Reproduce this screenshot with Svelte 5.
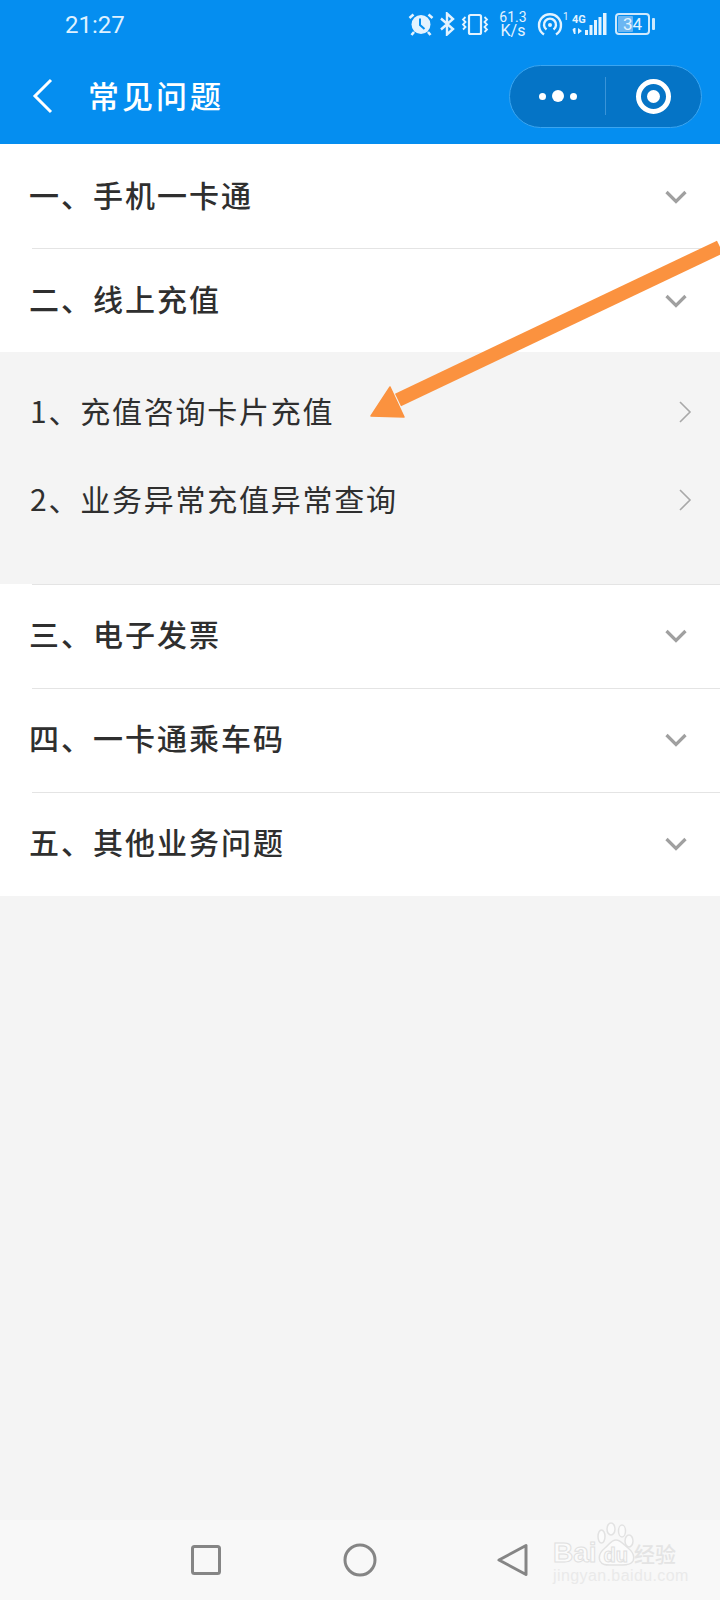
<script>
  const top = [
    { label: '一、手机一卡通', size: 'first' },
    { label: '二、线上充值', size: 'second' }
  ];
  const subs = ['1、充值咨询卡片充值', '2、业务异常充值异常查询'];
  const rest = ['三、电子发票', '四、一卡通乘车码', '五、其他业务问题'];
</script>

{#snippet chevDown()}
  <svg width="24" height="16" viewBox="0 0 24 16"><path d="M2.5 3 12 12.5 21.5 3" fill="none" stroke="#a0a0a0" stroke-width="3.200"/></svg>
{/snippet}
{#snippet chevRight()}
  <svg width="16" height="24" viewBox="0 0 16 24"><path d="M3 2 13 12 3 22" fill="none" stroke="#a8a8a8" stroke-width="1.600"/></svg>
{/snippet}

<div class="page">
  <header>
    <div class="status">
      <span class="time">21:27</span>
      <div class="icons">
        <svg class="i-alarm" width="26" height="24" viewBox="0 0 26 24" fill="none" stroke="#e3f3ff">
          <circle cx="13" cy="12.500" r="9.500" fill="#e3f3ff" stroke="none"/>
          <path d="M12 6.500V13l4.500 4" stroke="#058ef0" stroke-width="2"/>
          <path d="M1.500 6l4-3.500M24.500 6l-4-3.500M6 20l-2.500 3M20 20l2.500 3" stroke-width="2.600"/>
        </svg>
        <svg class="i-bt" width="16" height="24" viewBox="0 0 16 24" fill="none" stroke="#e3f3ff" stroke-width="2.400"><path d="M2 6.500 14 17l-6 5.500V1.500L14 7 2 17.500"/></svg>
        <svg class="i-vib" width="28" height="24" viewBox="0 0 28 24" fill="none" stroke="#e3f3ff" stroke-width="1.800"><rect x="8" y="3" width="12" height="19" rx="1.500" stroke-width="2.200"/><path d="M4.500 5 2 7.500 4.500 10 2 12.500 4.500 15 2 17.500M23.500 5 26 7.500 23.500 10 26 12.500 23.500 15 26 17.500 23.500 20"/></svg>
        <div class="speed"><span>61.3</span><span class="unit">K/s</span></div>
        <svg class="i-hot" width="32" height="24" viewBox="0 0 32 24" fill="none" stroke="#e3f3ff" stroke-width="2.400"><path d="M7 22.500a11 11 0 1 1 12 0"/><path d="M9.500 17.500a6 6 0 1 1 7 0"/><circle cx="13" cy="13" r="2" fill="#e3f3ff" stroke="none"/><text x="26" y="8" class="tiny" fill="#e3f3ff" stroke="none">1</text></svg>
        <svg class="i-sig" width="36" height="24" viewBox="0 0 36 24" fill="#e3f3ff">
          <text x="1" y="11" class="g">4G</text>
          <path d="M3 22v-6l-1.500 1.500M3 16h1.500v6H3zM7 16v6l4-3z"/>
          <path d="M14 18h3v5h-3zM18.500 13h3v10h-3zM23 8h3v15h-3zM27.500 5h3v18h-3zM32 1h3.500v22H32z"/>
        </svg>
        <div class="batt">
          <div class="battbox"><span class="fill"></span><span class="num">34</span></div>
          <span class="nub"></span>
        </div>
      </div>
    </div>
    <div class="nav">
      <svg class="back" width="22" height="36" viewBox="0 0 22 36"><path d="M19 2 3 18l16 16" fill="none" stroke="#fff" stroke-width="3"/></svg>
      <h1>常见问题</h1>
      <div class="capsule">
        <div class="dots"><i></i><i class="big"></i><i></i></div>
        <span class="sep"></span>
        <div class="ring"><i></i></div>
      </div>
    </div>
  </header>

  <main>
    <section class="white">
      {#each top as t, i}
        <div class="row {t.size}" class:line={i > 0}><span>{t.label}</span>{@render chevDown()}</div>
      {/each}
    </section>
    <section class="subs">
      {#each subs as s}
        <div class="sub"><span>{s}</span>{@render chevRight()}</div>
      {/each}
    </section>
    <section class="white">
      {#each rest as t}
        <div class="row line"><span>{t}</span>{@render chevDown()}</div>
      {/each}
    </section>
  </main>

  <footer>
    <svg width="32" height="32" viewBox="0 0 32 32"><rect x="2.500" y="2.500" width="27" height="27" rx="2" fill="none" stroke="#858585" stroke-width="3"/></svg>
    <svg width="34" height="34" viewBox="0 0 34 34"><circle cx="17" cy="17" r="15" fill="none" stroke="#858585" stroke-width="3"/></svg>
    <svg width="32" height="34" viewBox="0 0 32 34"><path d="M29 2.500v29L2 17z" fill="none" stroke="#858585" stroke-width="3" stroke-linejoin="round"/></svg>
  </footer>

  <svg class="arrow" width="350" height="180" viewBox="0 0 350 180">
    <path d="M350 7 28 160" stroke="#fb923f" stroke-width="14" fill="none"/>
    <path d="M1 176 20 147 34 177Z" fill="#fb923f" stroke="#fb923f" stroke-width="1.500" stroke-linejoin="round"/>
  </svg>

  <div class="mark">
    <svg width="40" height="44" viewBox="0 0 40 44" fill="#fbfbfb" stroke="#e2e2e2" stroke-width="1.500">
      <ellipse cx="5.500" cy="14.500" rx="3.500" ry="6.500"/><ellipse cx="15" cy="7" rx="4" ry="6"/><ellipse cx="26" cy="9" rx="3.500" ry="6"/><ellipse cx="33" cy="19" rx="4" ry="6"/>
      <path d="M20 18c-5 0-7 5-11 8-5 4-7 8-5 13 2 4 6 4 10 4h12c4 0 9 0 11-4 2-5 0-9-5-13-4-3-7-8-12-8z"/>
    </svg>
    <div class="brand"><span>Bai</span><span class="du">du</span><span class="jy">经验</span></div>
    <div class="url">jingyan.baidu.com</div>
  </div>
</div>

<style>
  :global(body) { margin: 0; background: #f4f4f4; }
  .page {
    position: relative;
    width: 720px;
    height: 1600px;
    overflow: hidden;
    display: flex;
    flex-direction: column;
    background: #f4f4f4;
    font-family: "Noto Sans CJK SC", "Noto Sans", sans-serif;
    color: #2f2f2f;
  }
  header { height: 144px; background: #058ef0; color: #fff; flex: none; }
  .status { height: 48px; display: flex; align-items: center; justify-content: space-between; padding: 0 65px; }
  .time { font: 24px/1 Roboto, sans-serif; color: #dff1ff; margin-top: 2px; }
  .icons { display: flex; align-items: center; }
  .i-bt { margin-left: 5px; }
  .i-vib { margin-left: 6px; }
  .speed { display: flex; flex-direction: column; align-items: center; width: 30px; margin-left: 9px; font: 14px/13px Roboto, sans-serif; color: #e3f3ff; }
  .unit { font-size: 16px; }
  .i-hot { margin-left: 9px; }
  .i-sig { margin-left: 2px; }
  .tiny { font: 10px Roboto, sans-serif; }
  .g { font: bold 11px Roboto, sans-serif; }
  .batt { display: flex; align-items: center; gap: 2px; margin-left: 8px; }
  .battbox { position: relative; width: 31px; height: 18px; border: 2px solid #cfe9fd; border-radius: 4px; display: flex; align-items: center; justify-content: center; }
  .fill { position: absolute; left: 1px; top: 1px; bottom: 1px; width: 15px; background: #6cb6f2; border-radius: 1px; }
  .num { position: relative; font: 17px/1 Roboto, sans-serif; color: #e3f3ff; }
  .nub { width: 3px; height: 12px; background: #cfe9fd; border-radius: 1px; }
  .nav { height: 96px; display: flex; align-items: center; padding: 0 18px 0 32px; }
  .back { flex: none; }
  h1 { margin: -4px 0 0 34px; font-size: 31px; font-weight: 500; letter-spacing: 3px; flex: 1; line-height: 1; }
  .capsule { width: 193px; height: 63px; box-sizing: border-box; border-radius: 32px; background: #0574c6; border: 1px solid #3ba5f0; display: flex; align-items: center; }
  .dots { width: 95px; display: flex; align-items: center; justify-content: center; gap: 6px; }
  .dots i { width: 7px; height: 7px; border-radius: 50%; background: #fff; }
  .dots i.big { width: 12px; height: 12px; }
  .sep { width: 1px; height: 38px; background: #3a94d8; }
  .ring { flex: 1; display: flex; align-items: center; justify-content: center; }
  .ring i { width: 35px; height: 35px; box-sizing: border-box; border: 5px solid #fff; border-radius: 50%; position: relative; }
  .ring i::after { content: ""; position: absolute; inset: 6px; border-radius: 50%; background: #fff; }
  main { flex: 1; }
  .white { background: #fff; }
  .row { height: 104px; display: flex; align-items: center; justify-content: space-between; padding: 0 32px 0 29px; position: relative; font-size: 30px; letter-spacing: 2px; box-sizing: border-box; font-weight: 500; }
  .row.first { height: 105px; }
  .row.second { height: 103px; }
  .row span { margin-top: -6px; }
  .row.line::before { content: ""; position: absolute; left: 32px; right: 0; top: 0; height: 1px; background: #e4e4e4; }
  .row.second::before { top: -1px; }
  .subs { background: #f4f4f4; height: 232px; padding-top: 16px; box-sizing: border-box; }
  .sub { height: 88px; display: flex; align-items: center; justify-content: space-between; padding: 0 27px 0 30px; font-size: 30px; letter-spacing: 1.750px; }
  .sub span { margin-top: -4px; }
  footer { position: absolute; left: 0; right: 0; bottom: 0; height: 80px; background: #f8f8f8; display: flex; align-items: center; padding-left: 190px; }
  footer svg:nth-child(1) { margin-right: 121px; }
  footer svg:nth-child(2) { margin-right: 120px; }
  .arrow { position: absolute; left: 370px; top: 240px; }
  .mark { position: absolute; left: 552px; top: 1522px; width: 150px; height: 70px; color: #e6e6e6; }
  .mark > svg { position: absolute; left: 44px; top: 0; }
  .brand { position: absolute; left: 1px; top: 17px; white-space: nowrap; font: bold 28px/1 "Liberation Sans", sans-serif; display: flex; align-items: baseline; color: #fbfbfb; -webkit-text-stroke: 1px #e0e0e0; }
  .du { font-size: 20px; margin: 0 6px 0 7px; }
  .jy { font: 500 21px/1 "Noto Sans CJK SC", sans-serif; -webkit-text-stroke: 0; color: #e4e4e4; }
  .url { position: absolute; left: 1px; top: 46px; font: 16px/1 "Liberation Sans", sans-serif; letter-spacing: 0.400px; white-space: nowrap; color: #eaeaea; }
</style>
